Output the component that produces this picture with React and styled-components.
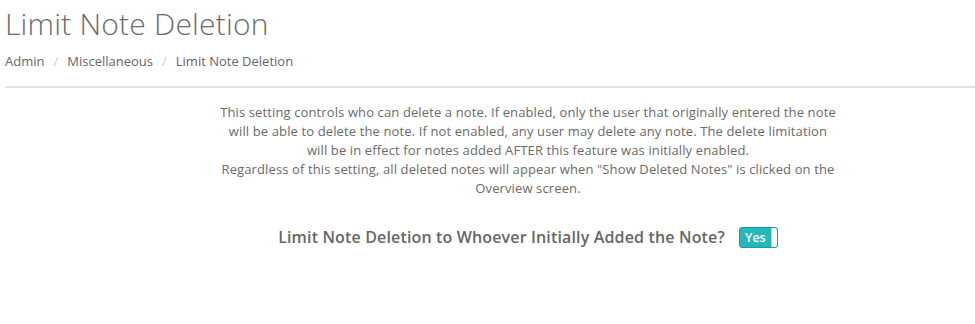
import React, { useState } from "react";
import styled, { createGlobalStyle } from "styled-components";

const GlobalStyle = createGlobalStyle`
  body {
    margin: 0;
    background: #fff;
    font-family: "Open Sans", "Liberation Sans", sans-serif;
    color: #666;
    letter-spacing: 0.12px;
  }
`;

const Page = styled.div`
  padding: 0 0 0 5px;
`;

const Header = styled.div`
  border-bottom: 2px solid #e3e3e3;
  padding-bottom: 16px;
`;

const Title = styled.h1`
  margin: 0;
  padding-top: 4px;
  font-size: 30px;
  font-weight: 300;
  line-height: 40px;
  color: #6b6b6b;
  letter-spacing: 0.2px;
`;

const Crumbs = styled.div`
  display: flex;
  align-items: center;
  margin-top: 8px;
  font-size: 13px;
  line-height: 18px;
  color: #666;
  letter-spacing: 0;
`;

const Sep = styled.span`
  color: #ccc;
  padding: 0 9px;
`;

const Settings = styled.section`
  padding: 15px 0 0 76px;
  text-align: center;
`;

const Description = styled.p`
  margin: 0 auto;
  max-width: 618px;
  font-size: 13px;
  line-height: 19px;
  color: #6a6a6a;
`;

const Row = styled.div`
  display: flex;
  justify-content: center;
  align-items: center;
  gap: 14px;
  margin-top: 28px;
`;

const Label = styled.span`
  font-size: 16px;
  font-weight: 600;
  color: #666;
  letter-spacing: 0.15px;
`;

const Toggle = styled.button`
  display: flex;
  align-items: stretch;
  width: 39px;
  height: 21px;
  padding: 0;
  border: 1px solid #1a9c9c;
  border-radius: 3px;
  background: #26b8b8;
  cursor: pointer;
  overflow: hidden;
`;

const ToggleText = styled.span`
  flex: 1;
  display: flex;
  align-items: center;
  justify-content: center;
  font-family: "Open Sans", "Liberation Sans", sans-serif;
  font-size: 12.5px;
  font-weight: 600;
  color: #fff;
`;

const Knob = styled.span`
  width: 5px;
  background: #fff;
  border-left: 1px solid #ccc;
  border-radius: 0 2px 2px 0;
`;

export default function App() {
  const [on, setOn] = useState(true);
  return (
    <Page>
      <GlobalStyle />
      <Header>
        <Title>Limit Note Deletion</Title>
        <Crumbs>
          <span>Admin</span>
          <Sep>/</Sep>
          <span>Miscellaneous</span>
          <Sep>/</Sep>
          <span>Limit Note Deletion</span>
        </Crumbs>
      </Header>
      <Settings>
        <Description>
          This setting controls who can delete a note. If enabled, only the user
          that originally entered the note will be able to delete the note. If
          not enabled, any user may delete any note. The delete limitation will
          be in effect for notes added AFTER this feature was initially enabled.
          <br />
          Regardless of this setting, all deleted notes will appear when "Show
          Deleted Notes" is clicked on the Overview screen.
        </Description>
        <Row>
          <Label>Limit Note Deletion to Whoever Initially Added the Note?</Label>
          <Toggle onClick={() => setOn(!on)}>
            <ToggleText>{on ? "Yes" : "No"}</ToggleText>
            <Knob />
          </Toggle>
        </Row>
      </Settings>
    </Page>
  );
}
